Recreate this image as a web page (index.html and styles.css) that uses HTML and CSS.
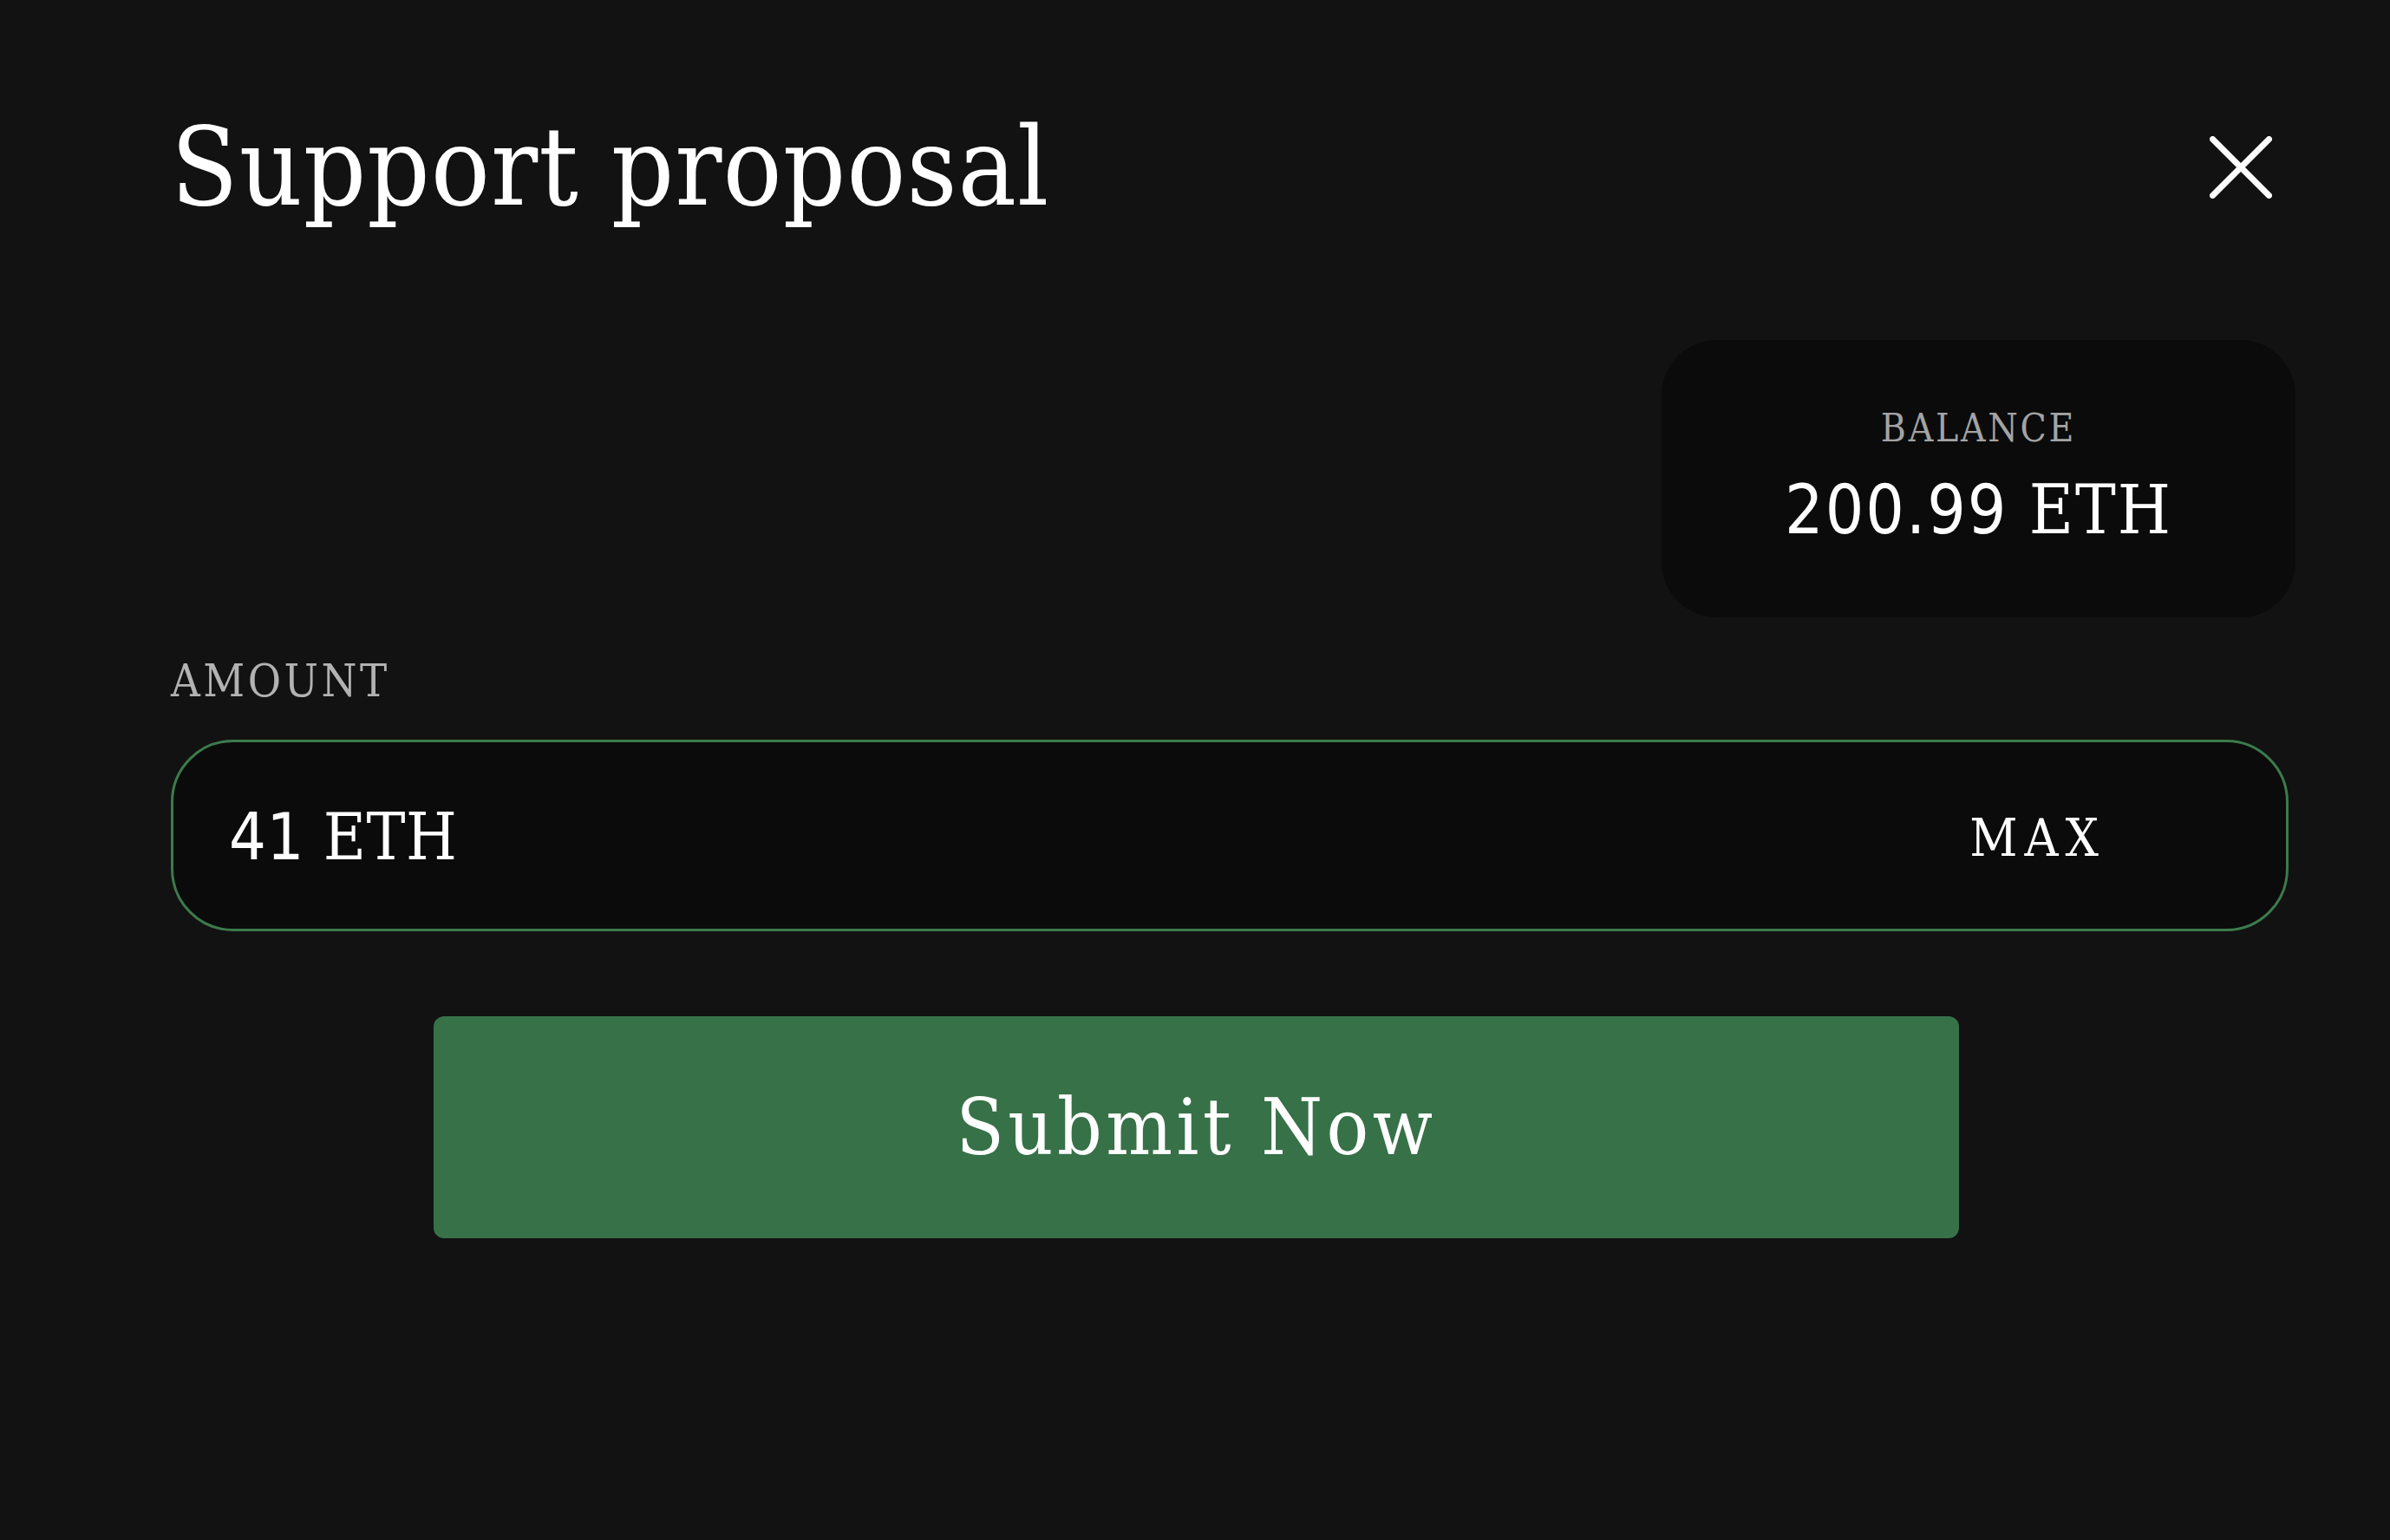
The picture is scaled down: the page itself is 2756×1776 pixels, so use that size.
FILE: index.html
```html
<!DOCTYPE html>
<html lang="en">
<head>
<meta charset="utf-8">
<title>Support proposal</title>
<link rel="stylesheet" href="styles.css">
</head>
<body>
<main class="modal">
  <header class="modal-header">
    <h1 class="modal-title">Support proposal</h1>
    <button class="close-btn" aria-label="Close">
      <svg viewBox="0 0 72 72" width="72" height="72" aria-hidden="true">
        <path d="M3.5 3.5 L68.5 68.5 M68.5 3.5 L3.5 68.5" stroke="#ffffff" stroke-width="7" stroke-linecap="round" fill="none"/>
      </svg>
    </button>
  </header>

  <section class="balance-card">
    <div class="balance-label">BALANCE</div>
    <div class="balance-value"><span class="num">200.99</span> ETH</div>
  </section>

  <label class="amount-label" for="amount">AMOUNT</label>
  <div class="amount-field">
    <div class="amount-value" id="amount"><span class="num">41</span> ETH</div>
    <button class="max-btn">MAX</button>
  </div>

  <div class="actions">
    <button class="submit-btn">Submit Now</button>
  </div>
</main>
</body>
</html>
```

FILE: styles.css
```css
html, body {
  margin: 0;
  padding: 0;
  background: #121212;
}

body {
  font-family: "DejaVu Serif Condensed", "DejaVu Serif", serif;
  color: #ffffff;
  width: 2756px;
  height: 1776px;
  overflow: hidden;
}

.num {
  font-family: "DejaVu Sans Condensed", "DejaVu Sans", sans-serif;
}

.modal {
  display: flex;
  flex-direction: column;
  padding: 130px 117px 0 197px;
}

.modal-header {
  display: flex;
  align-items: center;
  justify-content: space-between;
}

.modal-title {
  margin: 0;
  font-size: 126px;
  line-height: 1;
  font-weight: normal;
  color: #ffffff;
  letter-spacing: 1px;
}

.close-btn {
  width: 72px;
  height: 72px;
  padding: 0;
  margin-right: 19px;
  border: none;
  background: none;
  display: flex;
}

.balance-card {
  align-self: flex-end;
  margin-top: 136px;
  margin-right: -8px;
  width: 731px;
  height: 320px;
  box-sizing: border-box;
  padding-top: 80px;
  background: #0b0b0b;
  border-radius: 64px;
  display: flex;
  flex-direction: column;
  align-items: center;
}

.balance-label {
  font-size: 44px;
  line-height: 1;
  color: #a3a3a3;
  letter-spacing: 2.7px;
}

.balance-value {
  margin-top: 33px;
  font-size: 78px;
  line-height: 1;
  color: #ffffff;
  letter-spacing: 2px;
}

.amount-label {
  margin-top: 47px;
  font-size: 52px;
  line-height: 1;
  color: #b2b2b2;
  letter-spacing: 3.5px;
}

.amount-field {
  margin-top: 42px;
  height: 221px;
  box-sizing: border-box;
  border: 3px solid #3c7a4c;
  border-radius: 72px;
  background: #0b0b0b;
  display: flex;
  align-items: center;
  justify-content: space-between;
  padding: 4px 216px 0 64px;
}

.amount-value {
  font-size: 75px;
  line-height: 1;
  color: #ffffff;
  letter-spacing: 0.5px;
}

.max-btn {
  font-family: inherit;
  font-size: 60px;
  line-height: 1;
  color: #ffffff;
  background: none;
  border: none;
  padding: 0;
  letter-spacing: 8px;
  margin-right: -8px;
}

.actions {
  margin-top: 98px;
  padding-left: 303px;
  display: flex;
}

.submit-btn {
  width: 1759px;
  height: 256px;
  border: none;
  border-radius: 12px;
  background: #377148;
  color: #ffffff;
  font-family: inherit;
  font-size: 90px;
  line-height: 1;
  padding: 0;
  letter-spacing: 4.5px;
}
```
